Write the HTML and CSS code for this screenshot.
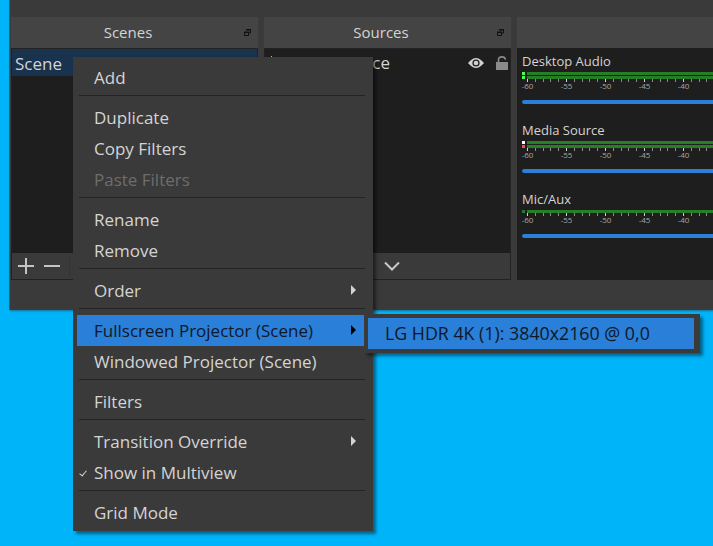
FILE: index.html
```html
<!DOCTYPE html>
<html lang="en">
<head>
  <meta charset="UTF-8">
  <title>OBS Studio</title>
  <link rel="stylesheet" href="styles.css">
</head>
<body>
  <div class="window">
    <section class="dock scenes">
      <div class="dock-title">Scenes
        <svg class="float-icon" width="7" height="7" viewBox="0 0 7 7"><path d="M2.500.5h4v3.500h-1.500" fill="none" stroke="#111"/><path d="M2 0h5v1.500H2zM0 2.500h5V7H0z" fill="#111"/><path d="M1 4h3v2H1z" fill="#444"/></svg>
      </div>
      <div class="list">
        <div class="row selected">Scene</div>
      </div>
      <div class="toolbar">
        <svg width="16" height="16" viewBox="0 0 16 16"><path d="M8 0v16M0 8h16" stroke="#c4c4c4" stroke-width="2"/></svg>
        <svg class="minus" width="16" height="16" viewBox="0 0 16 16"><path d="M0 8h16" stroke="#c4c4c4" stroke-width="2"/></svg>
        <i class="tool-divider"></i>
      </div>
    </section>

    <section class="dock sources">
      <div class="dock-title">Sources
        <svg class="float-icon" width="7" height="7" viewBox="0 0 7 7"><path d="M2.500.5h4v3.500h-1.500" fill="none" stroke="#111"/><path d="M2 0h5v1.500H2zM0 2.500h5V7H0z" fill="#111"/><path d="M1 4h3v2H1z" fill="#444"/></svg>
      </div>
      <div class="list">
        <div class="row source-row">
          <i class="source-type"></i>
          <span class="source-name">Media Source</span>
          <svg class="eye" width="16" height="10" viewBox="0 0 16 10"><path d="M0 5C3 1.500 5.500 0 8 0s5 1.500 8 5c-3 3.500-5.500 5-8 5S3 8.500 0 5z" fill="#d0d0d0"/><circle cx="8" cy="5" r="3.600" fill="#1e1e1e"/><circle cx="8" cy="5" r="2.300" fill="#d0d0d0"/></svg>
          <svg class="lock" width="12" height="14" viewBox="0 0 12 14"><path d="M2.500 6.500V4C2.500 2 4 .9 6 .9s3.200 1 3.500 2.700" fill="none" stroke="#8a8a8a" stroke-width="1.600"/><path d="M0 6h12v8H0z" fill="#8a8a8a"/></svg>
        </div>
      </div>
      <div class="toolbar toolbar-end">
        <svg width="16" height="10" viewBox="0 0 16 10"><path d="M1 1.500l7 7 7-7" fill="none" stroke="#c8c8c8" stroke-width="2"/></svg>
      </div>
    </section>

    <section class="dock mixer">
      <div class="dock-title"></div>
      <div class="mixer-body">
        <div class="channel">
          <div class="channel-name">Desktop Audio</div>
          <div class="meter"><i class="peak green"></i><i class="bar"></i></div>
          <div class="meter"><i class="peak green"></i><i class="bar"></i></div>
          <div class="scale"></div>
          <div class="labels"><span>-60</span><span>-55</span><span>-50</span><span>-45</span><span>-40</span></div>
          <div class="slider"></div>
        </div>
        <div class="channel">
          <div class="channel-name">Media Source</div>
          <div class="meter"><i class="peak white"></i><i class="bar"></i></div>
          <div class="meter"><i class="peak red"></i><i class="bar"></i></div>
          <div class="scale"></div>
          <div class="labels"><span>-60</span><span>-55</span><span>-50</span><span>-45</span><span>-40</span></div>
          <div class="slider"></div>
        </div>
        <div class="channel">
          <div class="channel-name">Mic/Aux</div>
          <div class="meter"><i class="peak dim"></i><i class="bar"></i></div>
          <div class="scale"></div>
          <div class="labels"><span>-60</span><span>-55</span><span>-50</span><span>-45</span><span>-40</span></div>
          <div class="slider"></div>
        </div>
      </div>
    </section>
  </div>

  <div class="menu main-menu">
    <div class="item">Add</div>
    <hr>
    <div class="item">Duplicate</div>
    <div class="item">Copy Filters</div>
    <div class="item disabled">Paste Filters</div>
    <hr>
    <div class="item">Rename</div>
    <div class="item">Remove</div>
    <hr>
    <div class="item has-sub">Order</div>
    <hr>
    <div class="item has-sub active">Fullscreen Projector (Scene)</div>
    <div class="item">Windowed Projector (Scene)</div>
    <hr>
    <div class="item">Filters</div>
    <hr>
    <div class="item has-sub">Transition Override</div>
    <div class="item checked">Show in Multiview</div>
    <hr>
    <div class="item">Grid Mode</div>
  </div>

  <div class="menu sub-menu">
    <div class="item active">LG HDR 4K (1): 3840x2160 @ 0,0</div>
  </div>
</body>
</html>
```

FILE: styles.css
```css
body {
  margin: 0;
  height: 546px;
  overflow: hidden;
  position: relative;
  background: #00b4fa;
  font-family: "Open Sans", "Noto Sans", sans-serif;
  color: #d4d4d4;
}

/* app window, cut off by the right edge */
.window {
  position: absolute;
  left: 10px;
  top: 0;
  width: 720px;
  height: 310px;
  box-sizing: border-box;
  padding: 17px 0 30px 1px;
  display: flex;
  gap: 6px;
  background: #3a3a3a;
  box-shadow: -1px 0 0 #1a6f90, 0 1px 2px #1a6f90;
}
.dock {
  width: 247px;
  display: flex;
  flex-direction: column;
}
.mixer {
  flex: 1;
}
.dock-title {
  position: relative;
  height: 31px;
  line-height: 31px;
  box-sizing: border-box;
  padding-right: 13px;
  background: #444;
  text-align: center;
  font-size: 15px;
}
.float-icon {
  position: absolute;
  right: 7px;
  top: 12px;
}
.list {
  flex: 1;
  background: #1e1e1e;
  font-size: 17px;
  border: 1px solid #222;
  border-bottom: 0;
}
.row {
  height: 27px;
  line-height: 29px;
  padding-left: 3px;
}
.selected {
  background: #19324e;
}
.source-row {
  display: flex;
  align-items: center;
  padding-left: 17px;
  position: relative;
}
.source-type {
  position: absolute;
  left: 6px;
  top: 7px;
  width: 1px;
  height: 1px;
  background: #b8b8b8;
}
.source-name {
  flex: 1;
}
.eye {
  margin-right: 12px;
}
.lock {
  margin-right: 2px;
}
.toolbar {
  height: 27px;
  box-sizing: border-box;
  background: #3a3a3a;
  border: 1px solid #222;
  border-top: 0;
  display: flex;
  align-items: center;
  padding-left: 6px;
}
.minus {
  margin-left: 10px;
}
.tool-divider {
  width: 1px;
  height: 20px;
  margin-left: 9px;
  background: #333;
}
.toolbar-end {
  justify-content: flex-end;
  padding-right: 110px;
}

/* audio mixer */
.mixer-body {
  flex: 1;
  background: #1e1e1e;
  overflow: hidden;
}
.channel {
  height: 69px;
  padding-left: 5px;
  font-size: 13px;
}
.channel-name {
  height: 24px;
  line-height: 27px;
  white-space: nowrap;
}
.meter {
  display: flex;
  gap: 2px;
  height: 3px;
  margin-bottom: 1px;
}
.peak {
  width: 3px;
  flex: none;
}
.green { background: #4cff4c; }
.white { background: #fff; }
.red { background: #ff4c4c; }
.dim { background: #267f26; }
.bar {
  flex: 1;
  background: #267f26;
}
.scale {
  height: 3px;
  margin: -1px 0 0 5px;
  background:
    repeating-linear-gradient(90deg, #d0d0d0 0 1px, transparent 1px 39px),
    repeating-linear-gradient(90deg, #8a8a8a 0 1px, transparent 1px 7.800px);
}
.labels {
  display: flex;
  margin-left: -14px;
  height: 8px;
  line-height: 7px;
  font-size: 8px;
  color: #a8a8a8;
}
.labels span {
  width: 39px;
  text-align: center;
}
.slider {
  height: 4px;
  margin-top: 10px;
  border-radius: 2px 0 0 2px;
  background: #2a7fd8;
}

/* context menu */
.menu {
  position: absolute;
  box-sizing: border-box;
  background: #3a3a3a;
  box-shadow: 3px 3px 3px rgba(0, 0, 0, 0.45);
  font-size: 17px;
}
.main-menu {
  left: 73px;
  top: 57px;
  width: 300px;
  height: 474px;
  padding: 5px 9px 0 4px;
}
.sub-menu {
  left: 364px;
  top: 314px;
  width: 336px;
  padding: 4px 6px 4px 4px;
  font-size: 17.800px;
}
.item {
  position: relative;
  height: 31px;
  line-height: 31px;
  padding-left: 17px;
  white-space: nowrap;
}
.disabled {
  color: #6d6d6d;
}
.active {
  background: #2a7fd8;
  color: #101828;
}
.has-sub::after {
  content: "";
  position: absolute;
  right: 8px;
  top: 10px;
  border-left: 5px solid #d4d4d4;
  border-top: 5px solid transparent;
  border-bottom: 5px solid transparent;
}
.has-sub.active::after {
  border-left-color: #000;
}
.checked::before {
  content: "";
  position: absolute;
  left: 4px;
  top: 12px;
  width: 3px;
  height: 6px;
  border: solid #d4d4d4;
  border-width: 0 1.500px 1.500px 0;
  transform: rotate(40deg);
}
hr {
  margin: 2px -1px 6px 2px;
  border: 0;
  height: 1px;
  background: #242424;
}
```
